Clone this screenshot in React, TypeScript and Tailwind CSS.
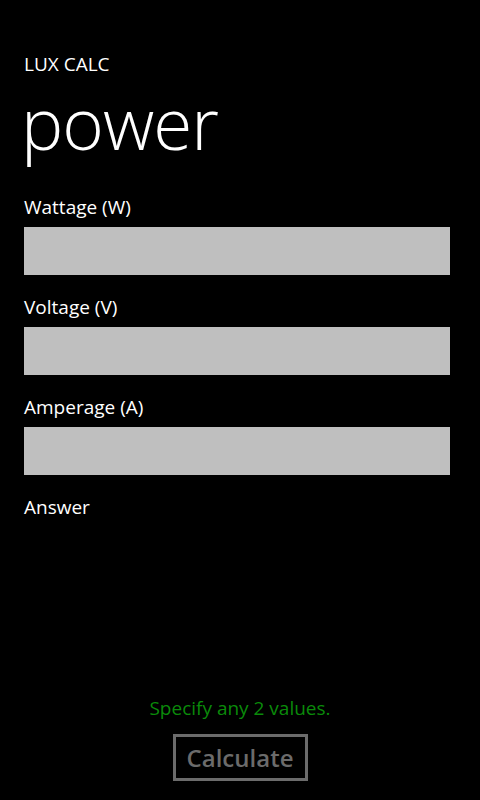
const fields = ["Wattage (W)", "Voltage (V)", "Amperage (A)"];

export default function App() {
  return (
    <div
      className="flex h-[800px] w-[480px] flex-col bg-black text-white"
      style={{ fontFamily: '"Open Sans", "Noto Sans", sans-serif' }}
    >
      <div className="px-6 pt-[55px]">
        <div className="text-[19px] leading-[19px]">LUX CALC</div>
        <div className="-ml-[3px] text-[71px] font-light leading-[97px] tracking-[-1px]">power</div>
      </div>

      <div className="mt-[23px] flex flex-col px-6">
        {fields.map((f) => (
          <div key={f} className="flex h-[100px] flex-col">
            <label className="text-[19px] leading-[26px]">{f}</label>
            <div className="mt-[7px] h-[48px] w-[426px] bg-[#bfbfbf]" />
          </div>
        ))}
        <div className="text-[19px] leading-[26px]">Answer</div>
      </div>

      <div className="mt-auto flex flex-col items-center pb-[19px]">
        <div className="text-[19px] leading-[26px] text-[#0a8a0a]">Specify any 2 values.</div>
        <button className="mt-[13px] h-[47px] w-[135px] border-[3px] border-[#6b6b6b] text-[24px] font-semibold leading-none text-[#6b6b6b]">
          Calculate
        </button>
      </div>
    </div>
  );
}
